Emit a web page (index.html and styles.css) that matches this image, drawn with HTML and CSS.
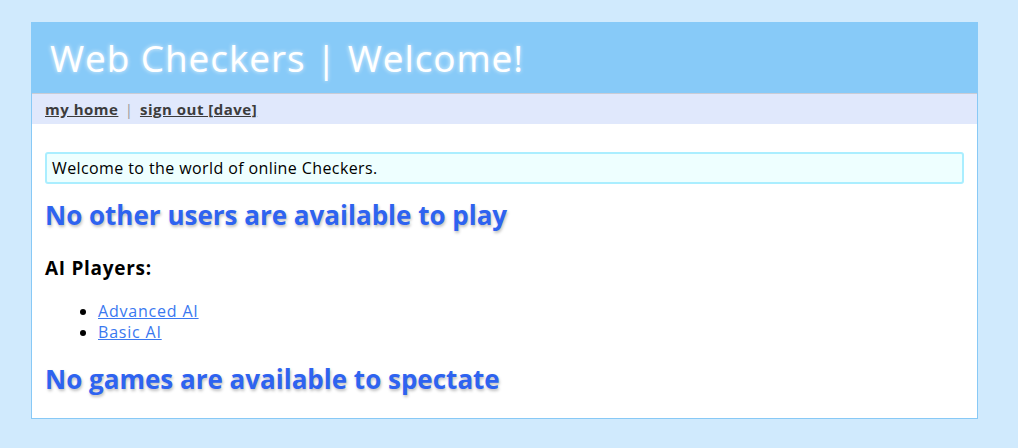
FILE: index.html
```html
<!DOCTYPE html>
<html>
<head>
<meta charset="utf-8">
<title>Web Checkers | Welcome!</title>
<link rel="stylesheet" href="styles.css">
</head>
<body>
<div class="page">
  <h1 class="title">Web Checkers | Welcome!</h1>
  <div class="navigation">
    <a href="#">my home</a> <span class="sep">|</span> <a href="#">sign out [dave]</a>
  </div>
  <div class="body">
    <div class="info">Welcome to the world of online Checkers.</div>
    <h2>No other users are available to play</h2>
    <h3>AI Players:</h3>
    <ul class="players">
      <li><a href="#">Advanced AI</a></li>
      <li><a href="#">Basic AI</a></li>
    </ul>
    <h2>No games are available to spectate</h2>
  </div>
</div>
</body>
</html>
```
FILE: styles.css
```css
html, body {
  margin: 0;
  padding: 0;
}
body {
  background: #d0eafd;
  font-family: "Open Sans", "Liberation Sans", Arial, sans-serif;
  font-size: 16px;
  color: #000;
  padding: 22px 0 0 31px;
}
.page {
  width: 945px;
  background: #fff;
  border: 1px solid #88c9f6;
  border-top: none;
}
.title {
  margin: 0 -1px;
  background: #87caf8;
  color: #fff;
  font-size: 37px;
  letter-spacing: 0.9px;
  font-weight: normal;
  height: 71px;
  line-height: 71px;
  padding: 0 0 0 19px;
  text-shadow: 0 0 4px rgba(255,255,255,0.8);
}
.navigation {
  background: #e0e8fc;
  border-top: 1px solid #c9ccd6;
  height: 30px;
  line-height: 30px;
  padding: 0 13px;
  font-size: 15px;
  font-weight: bold;
  color: #aaa;
  letter-spacing: 0.5px;
}
.navigation a {
  color: #3c3c3c;
}
.navigation .sep {
  font-weight: normal;
  color: #999;
  padding: 0 2px 0 2px;
}
.body {
  padding: 28px 13px 22px 13px;
}
.info {
  background: #eeffff;
  border: 2px solid #aaeeff;
  border-radius: 3px;
  height: 28px;
  line-height: 28px;
  padding: 0 5px;
  letter-spacing: 0.4px;
}
h2 {
  color: #2e63f0;
  font-size: 26px;
  margin: 14px 0 0 0;
  line-height: 34px;
  text-shadow: 1px 2px 3px rgba(0,0,0,0.25);
}
h3 {
  font-size: 19px;
  letter-spacing: 0.7px;
  margin: 23px 0 0 0;
  line-height: 26px;
}
.players {
  margin: 20px 0 0 0;
  padding-left: 53px;
  line-height: 21px;
}
.players a {
  color: #3a78f0;
  letter-spacing: 0.8px;
}
.players + h2 {
  margin-top: 19px;
}
```
